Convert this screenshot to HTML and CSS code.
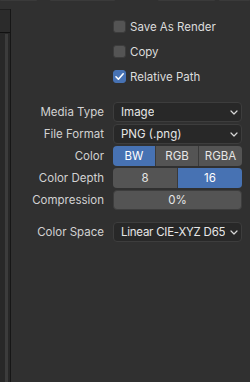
FILE: index.html
```html
<!DOCTYPE html>
<html lang="en">
<head>
  <meta charset="UTF-8">
  <title>Output Properties</title>
  <link rel="stylesheet" href="styles.css">
</head>
<body>
  <div class="top-edge">
    <span class="edge-box edge-a"></span>
    <span class="edge-box edge-b"></span>
    <span class="edge-box edge-c"></span>
    <span class="edge-box edge-d"></span>
  </div>
  <div class="area">
    <div class="side-panel">
      <div class="side-head"></div>
      <div class="side-body">
        <div class="side-strip"></div>
      </div>
    </div>
    <div class="props">
      <div class="checks">
        <label class="check-row">
          <span class="checkbox"></span>
          <span>Save As Render</span>
        </label>
        <label class="check-row">
          <span class="checkbox"></span>
          <span>Copy</span>
        </label>
        <label class="check-row">
          <span class="checkbox checked">
            <svg viewBox="0 0 13 13" width="13" height="13"><path d="M3 6.8 L5.4 9.2 L10.2 3.8" fill="none" stroke="#fff" stroke-width="1.6" stroke-linecap="round" stroke-linejoin="round"/></svg>
          </span>
          <span>Relative Path</span>
        </label>
      </div>

      <div class="fields">
        <div class="prop-row">
          <div class="prop-label">Media Type</div>
          <div class="dropdown"><span class="dd-text">Image</span><span class="chev"><svg viewBox="0 0 8 5" width="8" height="5"><path d="M1 1 L4 4 L7 1" fill="none" stroke="#d8d8d8" stroke-width="1.2" stroke-linecap="round" stroke-linejoin="round"/></svg></span></div>
        </div>
        <div class="prop-row">
          <div class="prop-label">File Format</div>
          <div class="dropdown"><span class="dd-text">PNG (.png)</span><span class="chev"><svg viewBox="0 0 8 5" width="8" height="5"><path d="M1 1 L4 4 L7 1" fill="none" stroke="#d8d8d8" stroke-width="1.2" stroke-linecap="round" stroke-linejoin="round"/></svg></span></div>
        </div>
        <div class="prop-row">
          <div class="prop-label">Color</div>
          <div class="segmented three">
            <div class="seg active">BW</div>
            <div class="seg">RGB</div>
            <div class="seg">RGBA</div>
          </div>
        </div>
        <div class="prop-row">
          <div class="prop-label">Color Depth</div>
          <div class="segmented two">
            <div class="seg">8</div>
            <div class="seg active">16</div>
          </div>
        </div>
        <div class="prop-row">
          <div class="prop-label">Compression</div>
          <div class="slider">0%</div>
        </div>
        <div class="prop-row spaced">
          <div class="prop-label">Color Space</div>
          <div class="dropdown"><span class="dd-text tight">Linear CIE-XYZ D65</span><span class="chev"><svg viewBox="0 0 8 5" width="8" height="5"><path d="M1 1 L4 4 L7 1" fill="none" stroke="#d8d8d8" stroke-width="1.2" stroke-linecap="round" stroke-linejoin="round"/></svg></span></div>
        </div>
      </div>
    </div>
  </div>
</body>
</html>
```

FILE: styles.css
```css
html, body {
  margin: 0;
  height: 100%;
}
body {
  background: #303030;
  font-family: 'Inter', 'Noto Sans', 'DejaVu Sans', sans-serif;
  font-size: 11.5px;
  color: #dcdcdc;
  width: 250px;
  height: 382px;
  overflow: hidden;
  display: flex;
  flex-direction: column;
}
.top-edge {
  height: 2px;
  display: flex;
  flex-shrink: 0;
}
.edge-box {
  height: 1px;
  background: #3a3a3a;
  border-radius: 0 0 3px 3px;
}
.edge-a { width: 37px; }
.edge-b { width: 65px; margin-left: 13px; }
.edge-c { width: 57px; margin-left: 43px; }
.edge-d { width: 31px; margin-left: 4px; }

.area {
  flex: 1;
  display: flex;
}
.side-panel {
  width: 10px;
  flex-shrink: 0;
  border-right: 1px solid #161616;
  display: flex;
  flex-direction: column;
  margin-top: 7px;
}
.side-head {
  height: 22px;
  border-top: 1px solid #1f1f1f;
  background: #2b2b2b;
}
.side-body {
  flex: 1;
  border-top: 1px solid #111;
  background: #282828;
  padding-left: 5px;
  padding-top: 1px;
}
.side-strip {
  width: 3px;
  height: 100%;
  background: #3c3c3c;
}

.props {
  flex: 1;
  min-width: 0;
  padding: 18px 8px 0 0;
}
.checks {
  display: flex;
  flex-direction: column;
  gap: 12px;
  padding-left: 102px;
}
.check-row {
  display: flex;
  align-items: center;
  gap: 4px;
  height: 13px;
  color: #dcdcdc;
}
.checkbox {
  width: 13px;
  height: 13px;
  border-radius: 3px;
  background: #545454;
  box-sizing: border-box;
  border: 1px solid #3c3c3c;
  display: flex;
  flex-shrink: 0;
}
.checkbox.checked {
  background: #4772b3;
  border-color: #4772b3;
}
.checkbox svg {
  margin: -1px;
}

.fields {
  margin-top: 19px;
  display: flex;
  flex-direction: column;
  gap: 2px;
}
.prop-row {
  display: flex;
  align-items: center;
  height: 20px;
}
.prop-row.spaced {
  margin-top: 10px;
}
.prop-label {
  width: 93px;
  flex-shrink: 0;
  text-align: right;
  padding-right: 9px;
  color: #d2d2d2;
  white-space: nowrap;
}
.dropdown {
  flex: 1;
  min-width: 0;
  height: 20px;
  box-sizing: border-box;
  background: #282828;
  border: 1px solid #3d3d3d;
  border-radius: 4px;
  display: flex;
  align-items: center;
  justify-content: space-between;
  padding: 0 2px 0 7px;
  color: #e6e6e6;
  white-space: nowrap;
  overflow: hidden;
}
.dd-text {
  overflow: hidden;
}
.dd-text.tight {
  letter-spacing: -0.25px;
}
.chev {
  display: flex;
  align-items: center;
  flex-shrink: 0;
  padding: 0 1px 0 2px;
}
.segmented {
  flex: 1;
  height: 20px;
  display: grid;
  border-radius: 4px;
  overflow: hidden;
  gap: 1px;
  background: #3a3a3a;
}
.segmented.three {
  grid-template-columns: 42px 42px 1fr;
}
.segmented.two {
  grid-template-columns: 64px 1fr;
}
.seg {
  background: #545454;
  display: flex;
  align-items: center;
  justify-content: center;
  color: #e6e6e6;
}
.seg.active {
  background: #4772b3;
  color: #fff;
}
.slider {
  flex: 1;
  height: 20px;
  box-sizing: border-box;
  background: #545454;
  border: 1px solid #3d3d3d;
  border-radius: 4px;
  display: flex;
  align-items: center;
  justify-content: center;
  color: #e6e6e6;
}
```
